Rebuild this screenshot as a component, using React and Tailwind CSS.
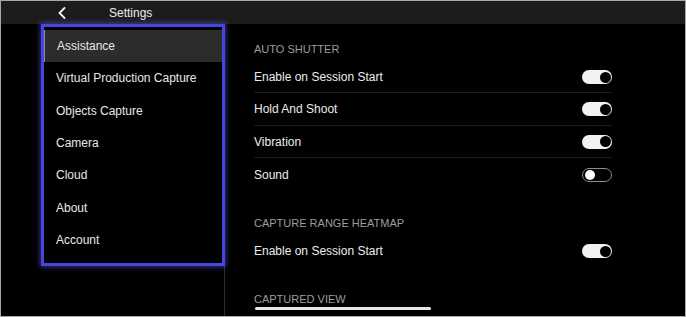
const menu = [
  "Assistance",
  "Virtual Production Capture",
  "Objects Capture",
  "Camera",
  "Cloud",
  "About",
  "Account",
];

function Toggle({ on }) {
  if (on) {
    return (
      <div className="w-[30px] h-[14px] rounded-full bg-[#f2f2f2] flex items-center justify-end pr-[1.5px]">
        <div className="w-[11px] h-[11px] rounded-full bg-black" />
      </div>
    );
  }
  return (
    <div className="w-[30px] h-[14px] rounded-full border border-[#8c8c8c] bg-black flex items-center pl-[1.5px]">
      <div className="w-[10px] h-[10px] rounded-full bg-white" />
    </div>
  );
}

function Row({ label, on, last }) {
  return (
    <div
      className={
        "h-[32.3px] flex items-center justify-between pt-px " +
        (last ? "" : "border-b border-[#1e1e1e]")
      }
    >
      <span className="text-[12px] text-[#ececec]">{label}</span>
      <Toggle on={on} />
    </div>
  );
}

function SectionTitle({ children, pt }) {
  return (
    <div className={"leading-[18px] text-[11px] text-[#9d9d9d] " + pt}>{children}</div>
  );
}

export default function App() {
  return (
    <div
      className="relative w-[686px] h-[317px] border border-[#a8a8a8] bg-black flex flex-col overflow-hidden"
      style={{ fontFamily: '"Liberation Sans", Arial, sans-serif' }}
    >
      <header className="h-[23px] shrink-0 bg-[#1c1c1c] flex items-center">
        <svg
          className="ml-[57px]"
          width="8"
          height="12"
          viewBox="0 0 8 12"
          fill="none"
          stroke="#f2f2f2"
          strokeWidth="1.8"
          strokeLinecap="round"
          strokeLinejoin="round"
        >
          <polyline points="6.5,1 1.5,6 6.5,11" />
        </svg>
        <span className="ml-[43px] text-[12px] text-[#ececec]">Settings</span>
      </header>

      <div className="flex flex-1 min-h-0">
        <aside className="w-[224px] shrink-0 border-r border-[#2e2e2e]">
          <nav className="relative z-10 ml-[40px] w-[184px] h-[242px] border-[3px] border-[#4747de] shadow-[0_0_5px_1px_rgba(90,90,255,0.55)] pt-[3px]">
            {menu.map((item, i) => (
              <div
                key={item}
                className={
                  "h-[32.3px] flex items-center pl-[12px] text-[12px] text-[#e8e8e8] " +
                  (i === 0 ? "bg-[#2c2c2c] border-l border-[#8a8aa6] pl-[11px]" : "")
                }
              >
                {item}
              </div>
            ))}
          </nav>
        </aside>

        <main className="flex-1 pl-[29px]">
          <div className="w-[358px]">
            <SectionTitle pt="pt-[16px] mb-[3px]">AUTO SHUTTER</SectionTitle>
            <Row label="Enable on Session Start" on />
            <Row label="Hold And Shoot" on />
            <Row label="Vibration" on />
            <Row label="Sound" on={false} last />

            <SectionTitle pt="pt-[24px] mb-[2.5px]">CAPTURE RANGE HEATMAP</SectionTitle>
            <Row label="Enable on Session Start" on last />

            <SectionTitle pt="pt-[23px]">CAPTURED VIEW</SectionTitle>
          </div>
        </main>
      </div>

      <div className="absolute left-[254px] bottom-[6px] w-[176px] h-[3px] rounded-full bg-[#e6e6e6]" />
    </div>
  );
}
